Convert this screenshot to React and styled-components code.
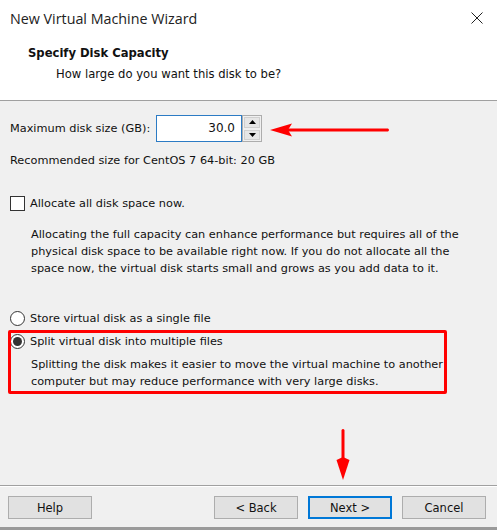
import React from "react";
import styled, { createGlobalStyle } from "styled-components";

const Global = createGlobalStyle`
  html, body { margin: 0; padding: 0; background: #f0f0f0; }
  body { font-family: "DejaVu Sans", Tahoma, sans-serif; }
`;

const Window = styled.div`
  position: relative;
  width: 497px;
  height: 530px;
  background: #f0f0f0;
  display: flex;
  flex-direction: column;
  font-family: "DejaVu Sans", Tahoma, sans-serif;
  font-size: 11.3px;
  color: #111;
  overflow: hidden;
  box-sizing: border-box;
  border-bottom: 3px solid #9a9a9a;
`;

const Header = styled.div`
  background: #fff;
  height: 100px;
  border-bottom: 1px solid #a0a0a0;
  display: flex;
  flex-direction: column;
`;

const TitleBar = styled.div`
  height: 36px;
  display: flex;
  align-items: center;
  justify-content: space-between;
  padding: 0 14px 0 10px;
`;

const Title = styled.span`
  font-family: "Open Sans", "Noto Sans", sans-serif;
  font-size: 14.3px;
  color: #222;
`;

const Heading = styled.div`
  font-weight: bold;
  font-size: 11.6px;
  padding-left: 28px;
  margin-top: 9px;
  line-height: 16px;
`;

const SubHeading = styled.div`
  font-size: 11.6px;
  padding-left: 56px;
  margin-top: 5px;
  line-height: 16px;
`;

const Body = styled.div`
  flex: 1;
  padding: 14px 10px 0 10px;
  display: flex;
  flex-direction: column;
`;

const SizeRow = styled.div`
  display: flex;
  align-items: center;
  height: 27px;
`;

const Label = styled.span`
  width: 146px;
`;

const NumberBox = styled.div`
  width: 86px;
  height: 27px;
  box-sizing: border-box;
  border: 1px solid #2c7bc4;
  background: #fff;
  display: flex;
  align-items: center;
  justify-content: flex-end;
  padding: 0 6px 2px 0;
  font-size: 12px;
`;

const Spinner = styled.div`
  width: 20px;
  height: 27px;
  box-sizing: border-box;
  border: 1px solid #adadad;
  display: flex;
  flex-direction: column;
  background: #f0f0f0;
`;

const SpinBtn = styled.div`
  flex: 1;
  display: flex;
  align-items: center;
  justify-content: center;
  background: #e6e6e6;
  border: 1px solid #d0d0d0;
  margin: 1px;
`;

const Text = styled.div`
  line-height: 17px;
  margin-top: ${(p) => p.$mt || 0}px;
  padding-left: ${(p) => p.$indent || 0}px;
`;

const OptionRow = styled.div`
  display: flex;
  align-items: center;
  gap: 5px;
  margin-top: ${(p) => p.$mt || 0}px;
  height: ${(p) => p.$h || 17}px;
`;

const CheckBox = styled.div`
  width: 15px;
  height: 15px;
  box-sizing: border-box;
  border: 1px solid #333;
  background: #fff;
`;

const Radio = styled.div`
  width: 15px;
  height: 15px;
  box-sizing: border-box;
  border: 1px solid #333;
  border-radius: 50%;
  background: #fff;
  display: flex;
  align-items: center;
  justify-content: center;
  &::after {
    content: "";
    display: ${(p) => (p.$checked ? "block" : "none")};
    width: 9px;
    height: 9px;
    border-radius: 50%;
    background: #333;
  }
`;

const Footer = styled.div`
  border-top: 1px solid #a0a0a0;
  box-shadow: inset 0 1px 0 #fff;
  height: 42px;
  display: flex;
  align-items: flex-start;
  padding: 10px 11px 0 8px;
  box-sizing: border-box;
  gap: 10px;
`;

const Button = styled.div`
  width: 84px;
  height: 23px;
  box-sizing: border-box;
  background: #e1e1e1;
  border: ${(p) => (p.$primary ? "2px solid #0078d7" : "1px solid #adadad")};
  display: flex;
  align-items: center;
  justify-content: center;
  margin-left: ${(p) => (p.$push ? "auto" : "0")};
  font-size: 11.5px;
`;

const RedBox = styled.div`
  position: absolute;
  left: 8px;
  top: 330px;
  width: 439px;
  height: 64px;
  box-sizing: border-box;
  border: 3px solid #f00;
  border-radius: 2px;
  pointer-events: none;
`;

const Annot = styled.svg`
  position: absolute;
  pointer-events: none;
`;

export default function App() {
  return (
    <>
      <Global />
      <Window>
        <Header>
          <TitleBar>
            <Title>New Virtual Machine Wizard</Title>
            <svg width="12" height="12" viewBox="0 0 12 12">
              <path d="M0.5 0.5 L11.5 11.5 M11.5 0.5 L0.5 11.5" stroke="#222" strokeWidth="1" />
            </svg>
          </TitleBar>
          <Heading>Specify Disk Capacity</Heading>
          <SubHeading>How large do you want this disk to be?</SubHeading>
        </Header>
        <Body>
          <SizeRow>
            <Label>Maximum disk size (GB):</Label>
            <NumberBox>30.0</NumberBox>
            <Spinner>
              <SpinBtn>
                <svg width="7" height="4" viewBox="0 0 7 4"><path d="M3.5 0 L7 4 L0 4 Z" fill="#000" /></svg>
              </SpinBtn>
              <SpinBtn>
                <svg width="7" height="4" viewBox="0 0 7 4"><path d="M0 0 L7 0 L3.5 4 Z" fill="#000" /></svg>
              </SpinBtn>
            </Spinner>
          </SizeRow>
          <Text $mt={10}>Recommended size for CentOS 7 64-bit: 20 GB</Text>
          <OptionRow $mt={26} $h={17}>
            <CheckBox />
            <span>Allocate all disk space now.</span>
          </OptionRow>
          <Text $mt={14} $indent={21}>
            Allocating the full capacity can enhance performance but requires all of the
            <br />
            physical disk space to be available right now. If you do not allocate all the
            <br />
            space now, the virtual disk starts small and grows as you add data to it.
          </Text>
          <OptionRow $mt={33} $h={17}>
            <Radio />
            <span>Store virtual disk as a single file</span>
          </OptionRow>
          <OptionRow $mt={6} $h={17}>
            <Radio $checked />
            <span>Split virtual disk into multiple files</span>
          </OptionRow>
          <Text $mt={6} $indent={21}>
            Splitting the disk makes it easier to move the virtual machine to another
            <br />
            computer but may reduce performance with very large disks.
          </Text>
        </Body>
        <Footer>
          <Button>Help</Button>
          <Button $push>&lt; Back</Button>
          <Button $primary>Next &gt;</Button>
          <Button>Cancel</Button>
        </Footer>
        <RedBox />
        <Annot style={{ left: 268, top: 122 }} width="124" height="16" viewBox="0 0 124 16">
          <path d="M20 6.5 L120 6.5 Q122 8 120 9.5 L20 9.5 Z" fill="#f00" />
          <path d="M2 8 L24 1.5 L20 8 L24 14.5 Z" fill="#f00" />
        </Annot>
        <Annot style={{ left: 335, top: 428 }} width="16" height="54" viewBox="0 0 16 54">
          <path d="M6.5 2 Q8 0 9.5 2 L9.5 36 L6.5 36 Z" fill="#f00" />
          <path d="M1.5 32 L8 29 L14.5 32 L8 52 Z" fill="#f00" />
        </Annot>
      </Window>
    </>
  );
}
